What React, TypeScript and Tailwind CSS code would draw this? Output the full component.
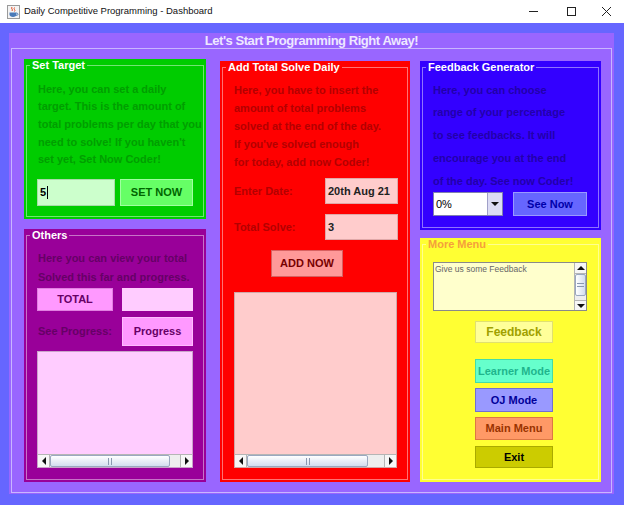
import React from 'react';

type PanelProps = {
    title: string;
    outer: string;
    titleCls: string;
    children?: React.ReactNode;
};

function Panel({ title, outer, titleCls, children }: PanelProps) {
    return (
        <div className={`${outer} flex flex-col px-[2px] pb-[2px]`}>
            <fieldset className="flex-1 min-h-0 border border-white/45">
                <legend className={`ml-[3px] px-[2px] text-[11px] leading-[12px] font-bold ${titleCls}`}>{title}</legend>
                {children}
            </fieldset>
        </div>
    );
}

function Arrow({ dir }: { dir: 'left' | 'right' | 'up' | 'down' }) {
    const pts = {
        left: '5,0 5,8 1,4',
        right: '1,0 1,8 5,4',
        up: '0,5 8,5 4,1',
        down: '0,1 8,1 4,5',
    }[dir];
    const vertical = dir === 'up' || dir === 'down';
    return (
        <svg width={vertical ? 8 : 6} height={vertical ? 6 : 8} viewBox={vertical ? '0 0 8 6' : '0 0 6 8'}>
            <polygon points={pts} fill="#111" />
        </svg>
    );
}

function HScroll({ thumb }: { thumb: string }) {
    return (
        <div className="flex h-[13px] bg-[#eeeeee] border-t border-[#b5b5b5]">
            <div className="w-[12px] h-full bg-[#f6f6f6] border-r border-[#b5b5b5] flex items-center justify-center">
                <Arrow dir="left" />
            </div>
            <div className={`${thumb} h-full border border-[#9aa8c0] rounded-[2px] bg-linear-to-b from-white to-[#d3ddef] flex items-center justify-center`}>
                <svg width="4" height="7" viewBox="0 0 4 7">
                    <line x1="0.5" y1="0" x2="0.5" y2="7" stroke="#8a98b0" />
                    <line x1="3.5" y1="0" x2="3.5" y2="7" stroke="#8a98b0" />
                </svg>
            </div>
            <div className="flex-1" />
            <div className="w-[12px] h-full bg-[#f6f6f6] border-l border-[#b5b5b5] flex items-center justify-center">
                <Arrow dir="right" />
            </div>
        </div>
    );
}

function TitleBar() {
    return (
        <div className="h-[23px] bg-white flex items-center">
            <svg className="ml-[7px]" width="13" height="14" viewBox="0 0 13 14">
                <rect x="0.5" y="0.5" width="12" height="13" fill="#f4f4f4" stroke="#9a9a9a" />
                <path d="M5 2 C3.5 3.5 6.5 4.5 5 6" stroke="#e2512b" fill="none" />
                <path d="M7.5 2.5 C6 4 9 5 7.5 6.5" stroke="#e2512b" fill="none" />
                <path d="M2.5 7.5 H9.5 V9.5 C9.5 11 8 12 6 12 C4 12 2.5 11 2.5 9.5 Z" fill="#4a7ab8" />
                <path d="M9.5 8 C11.5 8 11.5 10.5 9.3 10.5" stroke="#4a7ab8" fill="none" />
            </svg>
            <span className="ml-[4px] text-[9.5px] text-[#111]">Daily Competitive Programming - Dashboard</span>
            <div className="flex-1" />
            <svg width="9" height="9" viewBox="0 0 9 9" className="mr-[29px]">
                <line x1="0" y1="4.5" x2="9" y2="4.5" stroke="#222" />
            </svg>
            <svg width="9" height="9" viewBox="0 0 9 9" className="mr-[26px]">
                <rect x="0.5" y="0.5" width="8" height="8" fill="none" stroke="#222" />
            </svg>
            <svg width="9" height="9" viewBox="0 0 9 9" className="mr-[13px]">
                <line x1="0" y1="0" x2="9" y2="9" stroke="#222" />
                <line x1="9" y1="0" x2="0" y2="9" stroke="#222" />
            </svg>
        </div>
    );
}

export default function App() {
    return (
        <div className="w-[624px] h-[505px] flex flex-col bg-[#6666ff] font-['Liberation_Sans',Arial,sans-serif] overflow-hidden">
            <TitleBar />
            <div className="flex-1 pl-[9px] pt-[10px]">
                <div className="w-[605px] h-[461px] bg-[#9966ff] flex flex-col">
                    <div className="h-[15px] leading-[15px] text-center text-[13px] font-bold tracking-[-0.45px] text-[#eee8ff]">
                        Let's Start Programming Right Away!
                    </div>
                    <div className="ml-[2px] w-[601px] h-[445px] border border-[#c9b6ff] flex items-start pl-[12px] pt-[10px]">
                        {/* left column */}
                        <div className="w-[182px] flex flex-col gap-[10px]">
                            <Panel title="Set Target" outer="h-[160px] bg-[#00cc00]" titleCls="text-white">
                                <div className="pl-[10px] pt-[9.5px]">
                                    <div className="pl-[1px] text-[11px] font-bold leading-[17.7px] text-[#009e00] whitespace-nowrap">
                                        <div>Here, you can set a daily</div>
                                        <div>target. This is the amount of</div>
                                        <div>total problems per day that you</div>
                                        <div>need to solve! If you haven't</div>
                                        <div>set yet, Set Now Coder!</div>
                                    </div>
                                    <div className="mt-[9.5px] flex">
                                        <div className="w-[78px] h-[27px] bg-[#ccffcc] border border-[#a8dca8] flex items-center pl-[2px] text-[11px] font-bold text-black">
                                            5<span className="ml-[1px] w-px h-[13px] bg-black" />
                                        </div>
                                        <button className="ml-[5px] w-[73px] h-[27px] bg-[#66ff66] border border-[#a0ffa0] text-[11px] font-bold text-[#006600]">
                                            SET NOW
                                        </button>
                                    </div>
                                </div>
                            </Panel>
                            <Panel title="Others" outer="h-[253px] bg-[#990099]" titleCls="text-white">
                                <div className="pl-[10px] pt-[7.5px]">
                                    <div className="pl-[1px] text-[11px] font-bold leading-[19px] text-[#660066] whitespace-nowrap">
                                        <div>Here you can view your total</div>
                                        <div>Solved this far and progress.</div>
                                    </div>
                                    <div className="mt-[1.5px] flex">
                                        <button className="w-[76px] h-[23px] bg-[#ff99ff] border border-[#e080e0] text-[11px] font-bold text-[#660066]">
                                            TOTAL
                                        </button>
                                        <div className="ml-[9px] w-[71px] h-[23px] bg-[#ffccff]" />
                                    </div>
                                    <div className="mt-[6px] flex items-center">
                                        <div className="w-[85px] pl-[1px] text-[11px] font-bold text-[#660066]">See Progress:</div>
                                        <button className="w-[71px] h-[29px] bg-[#ff99ff] border border-[#ffbbff] text-[11px] font-bold text-[#660066]">
                                            Progress
                                        </button>
                                    </div>
                                    <div className="mt-[5px] w-[156px] h-[117px] bg-[#ffccff] border border-[#c9a3c9] flex flex-col justify-end">
                                        <HScroll thumb="w-[120px]" />
                                    </div>
                                </div>
                            </Panel>
                        </div>

                        {/* middle column */}
                        <div className="ml-[14px] mt-[2px] w-[190px]">
                            <Panel title="Add Total Solve Daily" outer="h-[421px] bg-[#ff0000]" titleCls="text-white">
                                <div className="pl-[11px] pt-[9px]">
                                    <div className="text-[11px] font-bold leading-[17.9px] text-[#b30000] whitespace-nowrap">
                                        <div>Here, you have to insert the</div>
                                        <div>amount of total problems</div>
                                        <div>solved at the end of the day.</div>
                                        <div>If you've solved enough</div>
                                        <div>for today, add now Coder!</div>
                                    </div>
                                    <div className="mt-[6.5px] flex items-center">
                                        <div className="w-[91px] text-[11px] font-bold text-[#b30000]">Enter Date:</div>
                                        <div className="w-[73px] h-[26px] bg-[#ffcccc] border border-[#e0a8a8] flex items-center pl-[2px] text-[11px] font-bold text-[#222]">
                                            20th Aug 21
                                        </div>
                                    </div>
                                    <div className="mt-[10px] flex items-center">
                                        <div className="w-[91px] text-[11px] font-bold text-[#b30000]">Total Solve:</div>
                                        <div className="w-[73px] h-[26px] bg-[#ffcccc] border border-[#e0a8a8] flex items-center pl-[2px] text-[11px] font-bold text-[#222]">
                                            3
                                        </div>
                                    </div>
                                    <button className="mt-[10px] ml-[37px] w-[72px] h-[27px] bg-[#ff9999] border border-[#d86060] text-[11px] font-bold text-[#770000]">
                                        ADD NOW
                                    </button>
                                    <div className="mt-[15px] w-[163px] h-[176px] bg-[#ffcccc] border border-[#d0a8a8] flex flex-col justify-end">
                                        <HScroll thumb="w-[121px]" />
                                    </div>
                                </div>
                            </Panel>
                        </div>

                        {/* right column */}
                        <div className="ml-[10px] mt-[2px] w-[181px] flex flex-col gap-[8px]">
                            <Panel title="Feedback Generator" outer="h-[169px] bg-[#3300ff]" titleCls="text-white">
                                <div className="pl-[10px] pt-[5.5px]">
                                    <div className="text-[11px] font-bold leading-[22.75px] text-[#2200aa] whitespace-nowrap">
                                        <div>Here, you can choose</div>
                                        <div>range of your percentage</div>
                                        <div>to see feedbacks. It will</div>
                                        <div>encourage you at the end</div>
                                        <div>of the day. See now Coder!</div>
                                    </div>
                                    <div className="flex">
                                        <div className="w-[70px] h-[24px] bg-white border border-[#8080b0] flex">
                                            <div className="flex-1 flex items-center pl-[2px] text-[11px] text-black">0%</div>
                                            <div className="w-[15px] h-full bg-[#dcdcf4] border-l border-[#a0a0c8] flex items-center justify-center">
                                                <Arrow dir="down" />
                                            </div>
                                        </div>
                                        <button className="ml-[10px] w-[74px] h-[24px] bg-[#6666ff] border border-[#9999ff] text-[11px] font-bold text-[#0000aa]">
                                            See Now
                                        </button>
                                    </div>
                                </div>
                            </Panel>
                            <Panel title="More Menu" outer="h-[244px] bg-[#ffff33]" titleCls="text-[#f5a03c]">
                                <div className="pl-[10px] pt-[12px]">
                                    <div className="w-[154px] h-[49px] bg-[#ffffcc] border border-[#8a8a8a] flex">
                                        <div className="flex-1 pl-[1px] pt-[1px] text-[8.5px] leading-[10px] text-[#666]">Give us some Feedback</div>
                                        <div className="w-[12px] h-full flex flex-col bg-[#eeeeee] border-l border-[#b5b5b5]">
                                            <div className="h-[11px] bg-[#f6f6f6] border-b border-[#b5b5b5] flex items-center justify-center">
                                                <Arrow dir="up" />
                                            </div>
                                            <div className="h-[22px] border border-[#9aa8c0] rounded-[2px] bg-linear-to-r from-white to-[#d3ddef] flex items-center justify-center">
                                                <svg width="7" height="4" viewBox="0 0 7 4">
                                                    <line x1="0" y1="0.5" x2="7" y2="0.5" stroke="#8a98b0" />
                                                    <line x1="0" y1="3.5" x2="7" y2="3.5" stroke="#8a98b0" />
                                                </svg>
                                            </div>
                                            <div className="flex-1" />
                                            <div className="h-[10px] bg-[#f6f6f6] border-t border-[#b5b5b5] flex items-center justify-center">
                                                <Arrow dir="down" />
                                            </div>
                                        </div>
                                    </div>
                                    <div className="ml-[42px] flex flex-col">
                                        <button className="mt-[10px] w-[78px] h-[22px] bg-[#ffff99] border border-[#e0e070] text-[12px] font-bold text-[#a0a000]">
                                            Feedback
                                        </button>
                                        <button className="mt-[16px] w-[78px] h-[24px] bg-[#66ffcc] border border-[#44dda8] text-[11px] font-bold text-[#1fb58c]">
                                            Learner Mode
                                        </button>
                                        <button className="mt-[5px] w-[78px] h-[24px] bg-[#9999ff] border border-[#7070d0] text-[11px] font-bold text-[#000099]">
                                            OJ Mode
                                        </button>
                                        <button className="mt-[5px] w-[78px] h-[23px] bg-[#ff9966] border border-[#dd7744] text-[11px] font-bold text-[#993300]">
                                            Main Menu
                                        </button>
                                        <button className="mt-[6px] w-[78px] h-[22px] bg-[#cccc00] border border-[#aaaa00] text-[11px] font-bold text-black">
                                            Exit
                                        </button>
                                    </div>
                                </div>
                            </Panel>
                        </div>
                    </div>
                </div>
            </div>
        </div>
    );
}
